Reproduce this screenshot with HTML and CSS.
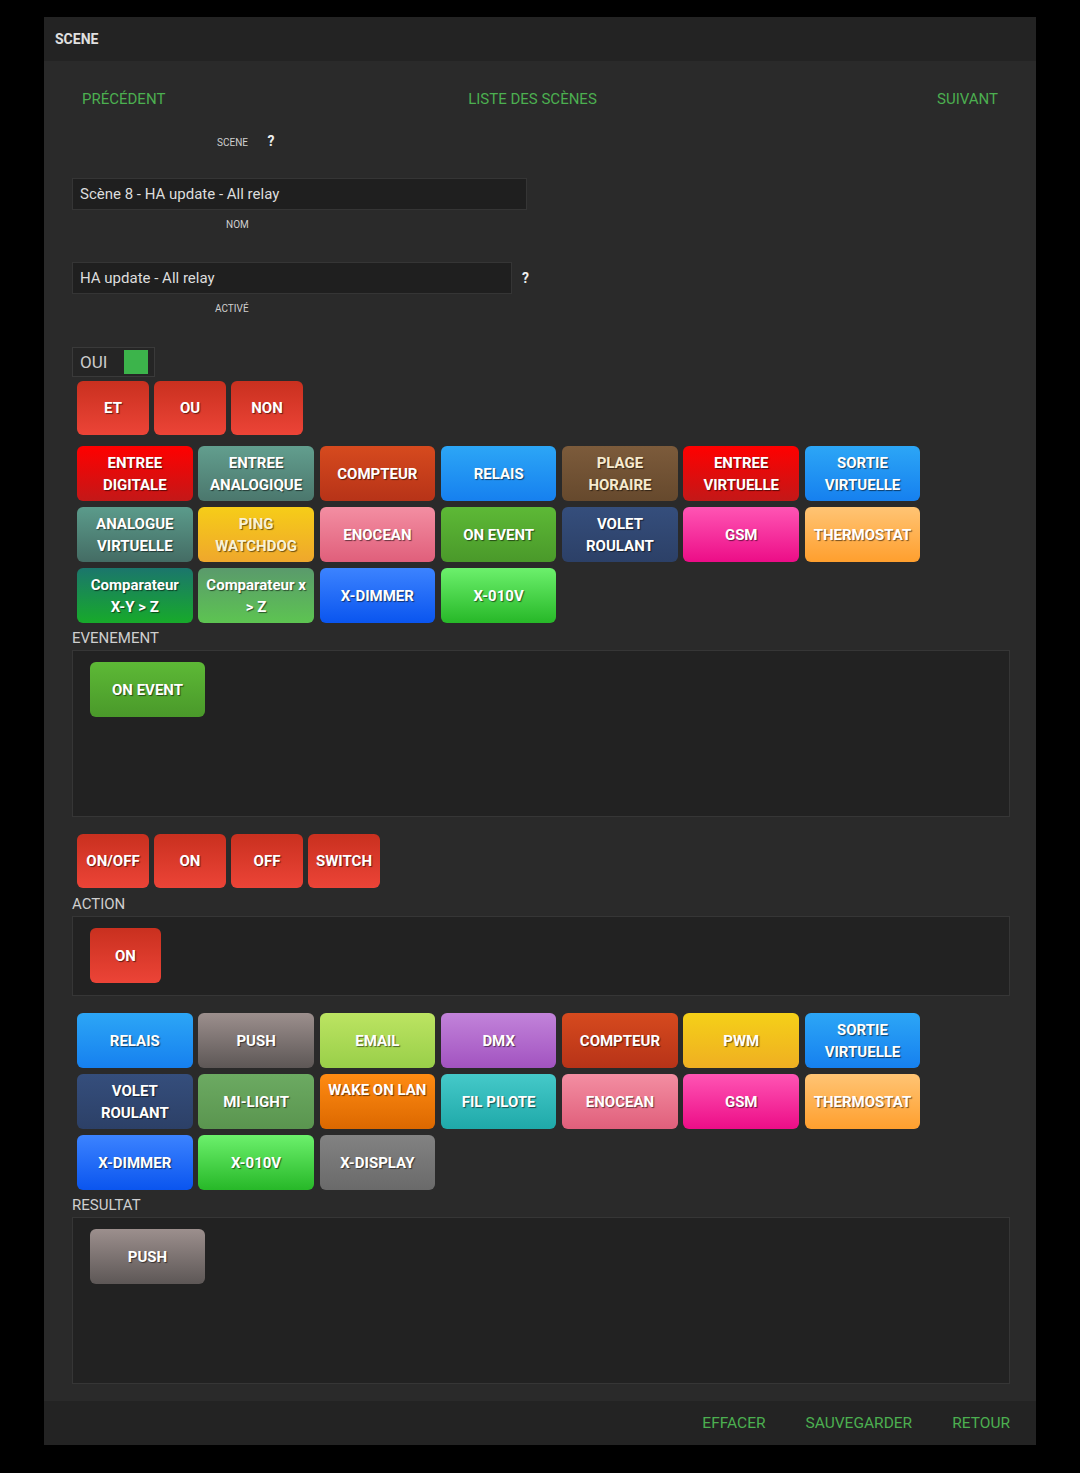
FILE: index.html
```html
<!DOCTYPE html>
<html lang="fr">
<head>
  <meta charset="UTF-8" />
  <title>Scene</title>
  <link rel="stylesheet" href="styles.css">
</head>
<body>
  <div class="dialog">
    <div class="dlg-head">SCENE</div>

    <div class="dlg-body">
      <div class="nav">
        <a class="prev">PRÉCÉDENT</a>
        <a class="mid">LISTE DES SCÈNES</a>
        <a class="next">SUIVANT</a>
      </div>

      <div class="lbl lbl-scene">SCENE <b class="help">?</b></div>
      <div class="field field-1">Scène 8 - HA update - All relay</div>
      <div class="lbl lbl-nom">NOM</div>
      <div class="row-help">
        <div class="field field-2">HA update - All relay</div>
        <b class="help">?</b>
      </div>
      <div class="lbl lbl-active">ACTIVÉ</div>

      <div class="check">OUI <span class="tick"></span></div>

      <div class="small-row logic">
        <div class="btn red">ET</div>
        <div class="btn red">OU</div>
        <div class="btn red">NON</div>
      </div>

      <div class="grid first">
        <div class="btn c-red">ENTREE<br>DIGITALE</div>
        <div class="btn c-teal">ENTREE<br>ANALOGIQUE</div>
        <div class="btn c-rust">COMPTEUR</div>
        <div class="btn c-blue">RELAIS</div>
        <div class="btn c-brown">PLAGE<br>HORAIRE</div>
        <div class="btn c-red">ENTREE<br>VIRTUELLE</div>
        <div class="btn c-blue">SORTIE<br>VIRTUELLE</div>
        <div class="btn c-teal2">ANALOGUE<br>VIRTUELLE</div>
        <div class="btn c-yellow">PING<br>WATCHDOG</div>
        <div class="btn c-pink">ENOCEAN</div>
        <div class="btn c-green">ON EVENT</div>
        <div class="btn c-navy">VOLET<br>ROULANT</div>
        <div class="btn c-magenta">GSM</div>
        <div class="btn c-peach">THERMOSTAT</div>
        <div class="btn c-comp1">Comparateur<br>X-Y &gt; Z</div>
        <div class="btn c-comp2">Comparateur x<br>&gt; Z</div>
        <div class="btn c-dimmer">X-DIMMER</div>
        <div class="btn c-lime">X-010V</div>
      </div>

      <div class="sect-title">EVENEMENT</div>
      <div class="drop drop-tall">
        <div class="btn c-green wide">ON EVENT</div>
      </div>

      <div class="small-row actions">
        <div class="btn red">ON/OFF</div>
        <div class="btn red">ON</div>
        <div class="btn red">OFF</div>
        <div class="btn red">SWITCH</div>
      </div>

      <div class="sect-title">ACTION</div>
      <div class="drop">
        <div class="btn red narrow">ON</div>
      </div>

      <div class="grid">
        <div class="btn c-blue">RELAIS</div>
        <div class="btn c-grey">PUSH</div>
        <div class="btn c-email">EMAIL</div>
        <div class="btn c-purple">DMX</div>
        <div class="btn c-rust">COMPTEUR</div>
        <div class="btn c-yellow2">PWM</div>
        <div class="btn c-blue">SORTIE<br>VIRTUELLE</div>
        <div class="btn c-navy">VOLET<br>ROULANT</div>
        <div class="btn c-moss">MI-LIGHT</div>
        <div class="btn c-orange top">WAKE ON LAN</div>
        <div class="btn c-cyan">FIL PILOTE</div>
        <div class="btn c-pink">ENOCEAN</div>
        <div class="btn c-magenta">GSM</div>
        <div class="btn c-peach">THERMOSTAT</div>
        <div class="btn c-dimmer">X-DIMMER</div>
        <div class="btn c-lime">X-010V</div>
        <div class="btn c-slate">X-DISPLAY</div>
      </div>

      <div class="sect-title">RESULTAT</div>
      <div class="drop drop-tall">
        <div class="btn c-grey wide">PUSH</div>
      </div>
    </div>

    <div class="dlg-foot">
      <a>EFFACER</a>
      <a>SAUVEGARDER</a>
      <a>RETOUR</a>
    </div>
  </div>
</body>
</html>
```

FILE: styles.css
```css
* {
  box-sizing: border-box;
  margin: 0;
  padding: 0;
}

body {
  background: #000;
  font-family: Roboto, "Liberation Sans", sans-serif;
  color: #ddd;
}

.dialog {
  width: 992px;
  margin: 17px 0 0 44px;
  background: #2a2a2a;
}

.dlg-head {
  height: 44px;
  background: #232323;
  padding-left: 11px;
  font-size: 14px;
  font-weight: bold;
  line-height: 44px;
  color: #e0e0e0;
}

.dlg-body {
  padding: 28px 26px 17px 28px;
}

.nav {
  display: grid;
  grid-template-columns: 1fr auto 1fr;
  padding: 0 12px 0 10px;
  height: 20px;
  line-height: 20px;
}

.nav .mid { margin-right: 15px; }
.nav .next { justify-self: end; }

.nav a, .dlg-foot a {
  color: #4caf50;
  font-size: 15px;
}

.lbl {
  font-size: 10px;
  color: #cfcfcf;
  height: 14px;
  line-height: 14px;
}

.help {
  font-size: 14px;
  color: #eee;
  margin-left: 17px;
}

.lbl-scene { margin: 25px 0 0 145px; }
.lbl-nom { margin: 8px 0 0 154px; }
.lbl-active { margin: 8px 0 0 143px; }

.field {
  height: 32px;
  background: #1f1f1f;
  border: 1px solid #353535;
  padding-left: 7px;
  font-size: 15px;
  line-height: 30px;
  color: #ddd;
}

.field-1 {
  width: 455px;
  margin-top: 30px;
}

.row-help {
  display: flex;
  align-items: center;
  margin-top: 30px;
}

.field-2 { width: 440px; }

.row-help .help { margin-left: 10px; }

.check {
  display: flex;
  align-items: center;
  width: 83px;
  height: 30px;
  margin-top: 31px;
  border: 1px solid #3a3a3a;
  background: #252525;
  padding-left: 7px;
  font-size: 17px;
  color: #ccc;
}

.tick {
  width: 24px;
  height: 24px;
  margin-left: 17px;
  background: #3cb44b;
}

.btn {
  display: flex;
  align-items: center;
  justify-content: center;
  text-align: center;
  height: 55px;
  border-radius: 6px;
  font-size: 15px;
  font-weight: bold;
  line-height: 22px;
  color: #fff;
  text-shadow: 1px 1px 1px rgba(0, 0, 0, 0.55);
}

.btn.top {
  align-items: flex-start;
  padding-top: 5px;
}

.small-row {
  display: flex;
  gap: 5px;
  margin-left: 5px;
}

.small-row .btn {
  width: 72px;
  height: 54px;
}

.logic { margin-top: 4px; }
.actions { margin-top: 17px; }

.grid {
  display: grid;
  grid-template-columns: repeat(7, 115.6px);
  column-gap: 5.7px;
  row-gap: 6px;
  margin: 17px 0 0 5px;
}

.grid.first { margin-top: 11px; }

.sect-title {
  margin-top: 6px;
  height: 18px;
  line-height: 18px;
  font-size: 15px;
  color: #cfcfcf;
}

.actions + .sect-title { margin-top: 7px; }

.drop {
  margin-top: 3px;
  background: #222;
  border: 1px solid #363636;
  padding: 11px 17px 12px;
}

.drop-tall { height: 167px; }

.btn.wide { width: 115px; }
.btn.narrow { width: 71px; }

.red { background: linear-gradient(#c9301f, #ec4437); }
.c-red { background: linear-gradient(#ff0000, #c31818); }
.c-teal { background: linear-gradient(#629e8e, #4b776d); }
.c-teal2 { background: linear-gradient(#5b9b8b, #446c64); }
.c-rust { background: linear-gradient(#d64a1e, #b73318); }
.c-blue { background: linear-gradient(#2ca6f6, #1680ef); }
.c-brown { background: linear-gradient(#7c5b3b, #66492d); color: #f7ebcf; }
.c-yellow { background: linear-gradient(#f6cd18, #efa72c); color: #f8f2d6; }
.c-yellow2 { background: linear-gradient(#f5d018, #efaf22); }
.c-pink { background: linear-gradient(#f38ea2, #e05f7b); }
.c-green { background: linear-gradient(#5db936, #4a992a); }
.c-navy { background: linear-gradient(#354e7c, #2c4067); }
.c-magenta { background: linear-gradient(#ff55b4, #ec0d87); }
.c-peach { background: linear-gradient(#ffc474, #ff9f2e); }
.c-comp1 { background: linear-gradient(#1b766c, #17aa2a); }
.c-comp2 { background: linear-gradient(#5a9a6c, #5dc451); }
.c-dimmer { background: linear-gradient(#3c83ff, #0a55ef); }
.c-lime { background: linear-gradient(#6cf06c, #27b828); }
.c-grey { background: linear-gradient(#9c8f8d, #5d5756); }
.c-email { background: linear-gradient(#bce462, #99cf49); }
.c-purple { background: linear-gradient(#c283da, #a253c0); }
.c-moss { background: linear-gradient(#6caa62, #5a954f); }
.c-orange { background: linear-gradient(#ff8b12, #dc6800); }
.c-cyan { background: linear-gradient(#45c9c9, #1fa9a9); }
.c-slate { background: linear-gradient(#828282, #6a6a6a); }

.dlg-foot {
  display: flex;
  justify-content: flex-end;
  gap: 40px;
  height: 44px;
  line-height: 44px;
  background: #232323;
  padding-right: 26px;
}

.dlg-foot a { font-size: 15.5px; }
```
